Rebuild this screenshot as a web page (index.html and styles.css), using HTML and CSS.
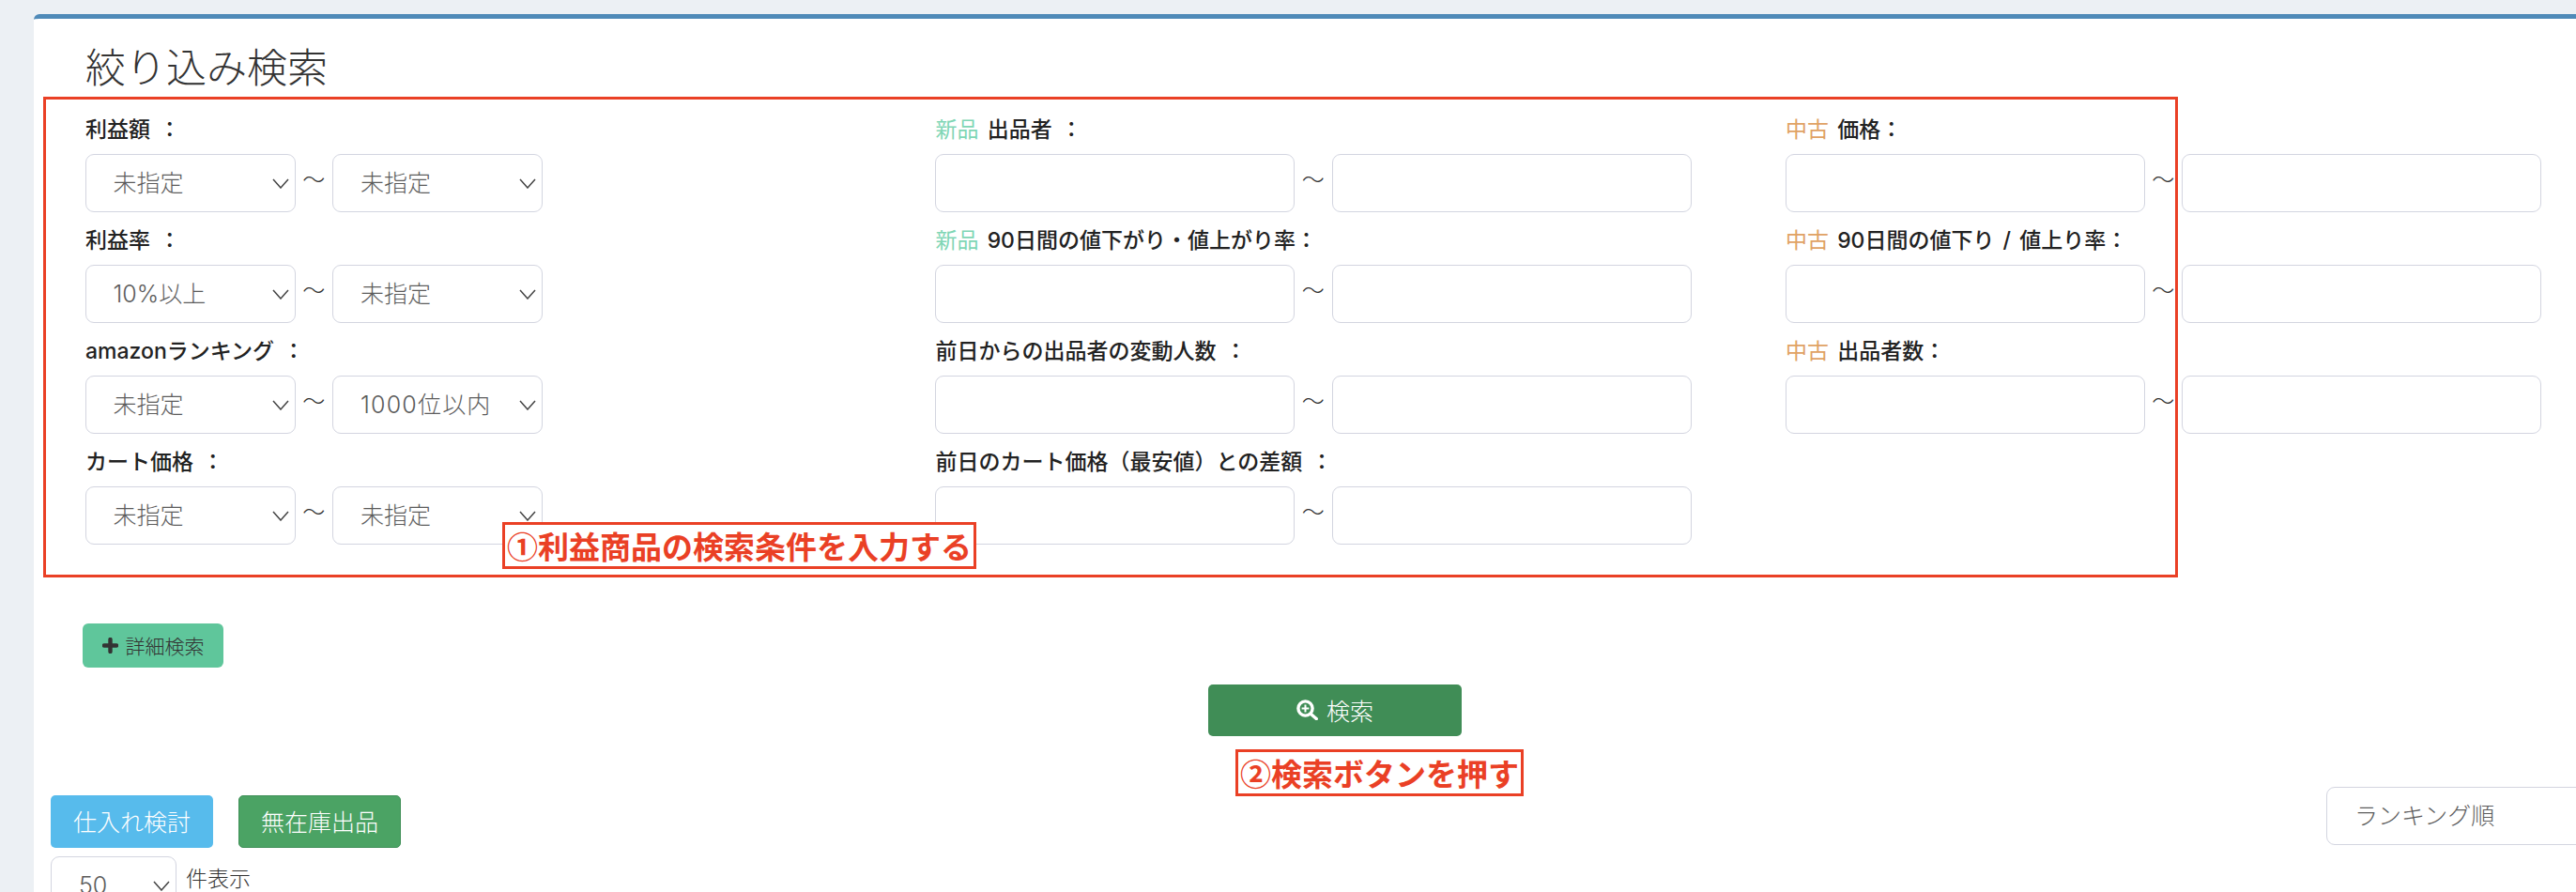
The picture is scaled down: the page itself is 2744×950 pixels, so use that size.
FILE: index.html
```html
<!DOCTYPE html>
<html lang="ja">
<head>
<meta charset="utf-8">
<title>絞り込み検索</title>
<link rel="stylesheet" href="styles.css">
</head>
<body>
<main class="card">
  <h2 class="title">絞り込み検索</h2>
  <div class="filters">
    <div class="col">
      <div class="group"><label class="label">利益額 ：</label><div class="range range-select"><select class="control"><option>未指定</option></select><span class="tilde">〜</span><select class="control"><option>未指定</option></select></div></div>
      <div class="group"><label class="label">利益率 ：</label><div class="range range-select"><select class="control"><option>10%以上</option></select><span class="tilde">〜</span><select class="control"><option>未指定</option></select></div></div>
      <div class="group"><label class="label">amazonランキング ：</label><div class="range range-select"><select class="control"><option>未指定</option></select><span class="tilde">〜</span><select class="control control-rank"><option>1000位以内</option></select></div></div>
      <div class="group"><label class="label">カート価格 ：</label><div class="range range-select"><select class="control"><option>未指定</option></select><span class="tilde">〜</span><select class="control"><option>未指定</option></select></div></div>
    </div>
    <div class="col">
      <div class="group"><label class="label"><span class="new">新品</span> 出品者 ：</label><div class="range"><input class="control"><span class="tilde">〜</span><input class="control"></div></div>
      <div class="group"><label class="label"><span class="new">新品</span> 90日間の値下がり・値上がり率：</label><div class="range"><input class="control"><span class="tilde">〜</span><input class="control"></div></div>
      <div class="group"><label class="label">前日からの出品者の変動人数 ：</label><div class="range"><input class="control"><span class="tilde">〜</span><input class="control"></div></div>
      <div class="group"><label class="label">前日のカート価格（最安値）との差額 ：</label><div class="range"><input class="control"><span class="tilde">〜</span><input class="control"></div></div>
    </div>
    <div class="col">
      <div class="group"><label class="label"><span class="used">中古</span> 価格：</label><div class="range"><input class="control"><span class="tilde">〜</span><input class="control"></div></div>
      <div class="group"><label class="label"><span class="used">中古</span> 90日間の値下り / 値上り率：</label><div class="range"><input class="control"><span class="tilde">〜</span><input class="control"></div></div>
      <div class="group"><label class="label"><span class="used">中古</span> 出品者数：</label><div class="range"><input class="control"><span class="tilde">〜</span><input class="control"></div></div>
    </div>
  </div>
  <button class="btn btn-detail">
    <svg class="icon-plus" viewBox="0 0 17 17"><path d="M8.5 2v13M2 8.5h13" fill="none" stroke="#333" stroke-width="4.4" stroke-linecap="round"/></svg>
    詳細検索
  </button>
  <div class="search-row">
    <button class="btn btn-search">
      <svg class="icon-search" viewBox="0 0 23 22"><circle cx="9.5" cy="9.5" r="7.6" fill="none" stroke="#fff" stroke-width="3.4"/><path d="M15.2 15.2l6 5.4" fill="none" stroke="#fff" stroke-width="3.4" stroke-linecap="round"/><path d="M9.5 5.6v7.8M5.6 9.5h7.8" fill="none" stroke="#fff" stroke-width="2"/></svg>
      検索
    </button>
  </div>
  <div class="toolbar">
    <div class="toolbar-left">
      <div class="actions">
        <button class="btn btn-action btn-info">仕入れ検討</button>
        <button class="btn btn-action btn-success">無在庫出品</button>
      </div>
      <div class="per-page">
        <select class="control control-small"><option>50</option></select>
        <span class="per-page-text">件表示</span>
      </div>
    </div>
    <select class="control control-sort"><option>ランキング順</option></select>
  </div>
</main>
<div class="mark mark-area"></div>
<div class="mark note note-one">①利益商品の検索条件を入力する</div>
<div class="mark note note-two">②検索ボタンを押す</div>
</body>
</html>
```

FILE: styles.css
```css
* { box-sizing: border-box; }

html, body {
  margin: 0;
  height: 950px;
  overflow: hidden;
}

body {
  position: relative;
  background: #ecf0f4;
  color: #333;
  font-family: Inter, "Noto Sans CJK JP", "Noto Sans", sans-serif;
}

.card {
  width: 2760px;
  height: 935px;
  overflow: hidden;
  margin: 15px 0 0 36px;
  padding-left: 18px;
  background: #fff;
  border-top: 5px solid #4f8ab8;
  border-top-left-radius: 6px;
}

.title {
  height: 82px;
  margin: 0 0 18px 37px;
  padding-top: 22px;
  font-size: 43px;
  font-weight: 300;
  line-height: 60px;
  color: #333;
}

.filters {
  display: grid;
  grid-template-columns: repeat(3, 905.5px);
  margin-left: 36.5px;
}

.group { height: 118px; }

.label {
  display: block;
  height: 36px;
  margin-bottom: 8px;
  padding-left: 0.5px;
  font-size: 23px;
  font-weight: 500;
  line-height: 36px;
  word-spacing: 3px;
  white-space: nowrap;
  color: #222;
}

.new { color: #7fd6b5; font-weight: 400; }
.used { color: #e0a264; font-weight: 400; }

.range {
  display: grid;
  grid-template-columns: 383px 39.5px 383px;
  align-items: center;
  height: 62px;
}

.range-select { grid-template-columns: 224px 39.5px 224px; }

.tilde {
  text-align: center;
  font-size: 24px;
  font-weight: 300;
  line-height: 24px;
  transform: translateY(-3px);
  color: #333;
}

.control {
  display: block;
  width: 100%;
  height: 62px;
  border: 1.5px solid #d3d5e0;
  border-radius: 9px;
  background: #fff;
  color: #5c5c5c;
  font-family: inherit;
  font-size: 25px;
  font-weight: 300;
  outline: none;
}

select.control {
  appearance: none;
  -webkit-appearance: none;
  padding: 0 0 0 29px;
  background-image: url("data:image/svg+xml,%3Csvg xmlns='http://www.w3.org/2000/svg' width='18' height='11' viewBox='0 0 18 11'%3E%3Cpath d='M1 1l8 9 8-9' fill='none' stroke='%23444' stroke-width='1.5'/%3E%3C/svg%3E");
  background-repeat: no-repeat;
  background-position: right 6px center;
  background-size: 18px 11px;
}

select.control-rank { letter-spacing: 1.2px; }

.btn {
  display: inline-flex;
  align-items: center;
  justify-content: center;
  border: 0;
  font-family: inherit;
}

.btn-detail {
  width: 150px;
  height: 47px;
  margin: 72px 0 0 34px;
  gap: 8px;
  padding-bottom: 2px;
  border-radius: 6px;
  background: #5fc69b;
  color: #333;
  font-size: 21px;
  font-weight: 300;
}

.icon-plus { width: 17px; height: 17px; }

.search-row {
  display: flex;
  justify-content: center;
  width: 2736px;
  margin-top: 18px;
}

.btn-search {
  width: 270px;
  height: 55px;
  gap: 9px;
  padding-bottom: 2px;
  border-radius: 5px;
  background: #408d56;
  color: #fff;
  font-size: 25px;
  font-weight: 300;
}

.icon-search { width: 23px; height: 22px; }

.toolbar {
  display: flex;
  justify-content: space-between;
  align-items: flex-start;
  width: 2724px;
  padding-top: 54px;
}

.toolbar-left { padding-top: 9px; }

.actions { display: flex; gap: 27px; }

.btn-action {
  width: 173px;
  height: 56px;
  padding-bottom: 3px;
  border-radius: 5px;
  color: #fff;
  font-size: 25px;
  font-weight: 300;
}

.btn-info { background: #57bbec; }
.btn-success { background: #4ba364; border: 1px solid #3f8f57; }

.per-page {
  display: flex;
  align-items: flex-start;
  gap: 10px;
  margin-top: 9px;
}

.control-small { width: 134px; }

.per-page-text {
  font-size: 23px;
  font-weight: 300;
  line-height: 48px;
}

.control-sort { width: 300px; height: 62px; }

.mark {
  position: absolute;
  border: 3px solid #ea4025;
}

.mark-area {
  left: 46px;
  top: 103px;
  width: 2274px;
  height: 512px;
}

.note {
  display: flex;
  align-items: center;
  justify-content: center;
  height: 50px;
  background: #fff;
  color: #ea4025;
  font-family: "Noto Sans CJK JP", sans-serif;
  font-size: 33px;
  font-weight: 700;
  line-height: 1;
  white-space: nowrap;
}

.note-one { left: 535px; top: 556px; width: 505px; }
.note-two { left: 1316px; top: 798px; width: 307px; }
```
